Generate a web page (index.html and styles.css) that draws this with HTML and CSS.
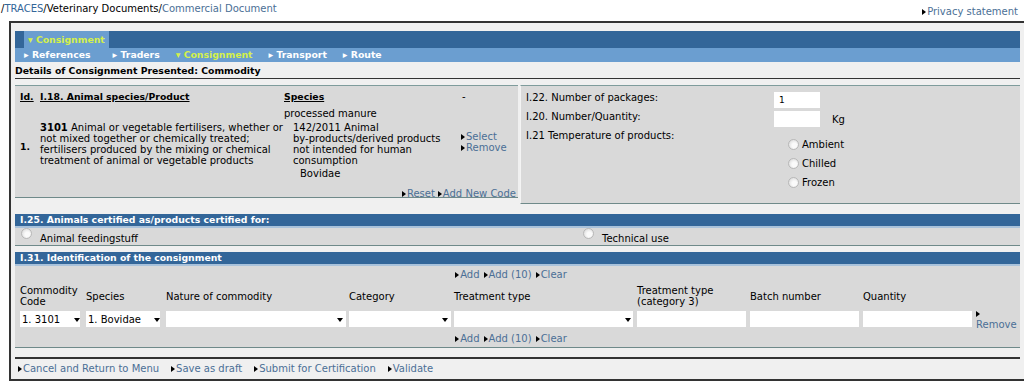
FILE: index.html
```html
<!DOCTYPE html>
<html lang="en">
<head>
  <meta charset="UTF-8" />
  <title>TRACES - Commercial Document</title>
  <link rel="stylesheet" href="styles.css">
</head>
<body>
  <div class="header">
    <div class="crumbs">/<a href="#">TRACES</a>/Veterinary Documents/<a href="#">Commercial Document</a></div>
    <a class="arrow privacy" href="#">Privacy statement</a>
  </div>

  <div class="frame">
    <!-- tabs -->
    <div class="tabs">
      <span class="tab-active">&#9662; Consignment</span>
    </div>
    <div class="subtabs">
      <span>&#9656; References</span>
      <span>&#9656; Traders</span>
      <span class="on">&#9662; Consignment</span>
      <span>&#9656; Transport</span>
      <span>&#9656; Route</span>
    </div>
    <div class="title">Details of Consignment Presented: Commodity</div>

    <div class="panels">
      <!-- I.18 -->
      <div class="panel left">
        <div class="prod-grid">
          <div class="th">Id.</div>
          <div class="th">I.18. Animal species/Product</div>
          <div class="th">Species</div>
          <div class="dash">-</div>

          <div class="rowid">1.</div>
          <div class="desc"><b>3101</b> Animal or vegetable fertilisers, whether or not mixed together or chemically treated; fertilisers produced by the mixing or chemical treatment of animal or vegetable products</div>
          <div class="species">
            <div>processed manure</div>
            <div class="sp-cat">142/2011 Animal<br>by-products/derived products<br>not intended for human<br>consumption</div>
            <div class="sp-name">Bovidae</div>
          </div>
          <div class="acts">
            <a class="arrow" href="#">Select</a>
            <a class="arrow" href="#">Remove</a>
          </div>
        </div>
        <div class="panel-links">
          <a class="arrow" href="#">Reset</a>
          <a class="arrow" href="#">Add New Code</a>
        </div>
      </div>

      <!-- I.20 - I.22 -->
      <div class="panel right">
        <div class="qty-grid">
          <div>I.22. Number of packages:</div>
          <div><input class="box" type="text" value="1"></div>
          <div>I.20. Number/Quantity:</div>
          <div><input class="box" type="text"><span class="unit">Kg</span></div>
          <div>I.21 Temperature of products:</div>
          <div class="temps">
            <label><input class="radio" type="radio" name="temp"> Ambient</label>
            <label><input class="radio" type="radio" name="temp"> Chilled</label>
            <label><input class="radio" type="radio" name="temp"> Frozen</label>
          </div>
        </div>
      </div>
    </div>

    <!-- I.25 -->
    <div class="bar">I.25. Animals certified as/products certified for:</div>
    <div class="block purpose">
      <label><input class="radio" type="radio" name="purpose"> <span>Animal feedingstuff</span></label>
      <label><input class="radio" type="radio" name="purpose"> <span>Technical use</span></label>
    </div>

    <!-- I.31 -->
    <div class="bar second">I.31. Identification of the consignment</div>
    <div class="block ident">
      <div class="add-links">
        <a class="arrow" href="#">Add</a>
        <a class="arrow" href="#">Add (10)</a>
        <a class="arrow" href="#">Clear</a>
      </div>
      <div class="id-grid">
        <div>Commodity<br>Code</div>
        <div>Species</div>
        <div>Nature of commodity</div>
        <div>Category</div>
        <div>Treatment type</div>
        <div>Treatment type<br>(category 3)</div>
        <div>Batch number</div>
        <div>Quantity</div>
        <div></div>

        <div class="sel w60"><select><option>1. 3101</option></select></div>
        <div class="sel w74"><select><option>1. Bovidae</option></select></div>
        <div class="sel w180"><select><option></option></select></div>
        <div class="sel w102"><select><option></option></select></div>
        <div class="sel w179"><select><option></option></select></div>
        <div><input class="cell" type="text"></div>
        <div><input class="cell" type="text"></div>
        <div><input class="cell" type="text"></div>
        <div class="remove"><span class="arrow"></span><br><a href="#">Remove</a></div>
      </div>
      <div class="add-links">
        <a class="arrow" href="#">Add</a>
        <a class="arrow" href="#">Add (10)</a>
        <a class="arrow" href="#">Clear</a>
      </div>
    </div>

    <div class="footer">
      <a class="arrow" href="#">Cancel and Return to Menu</a>
      <a class="arrow" href="#">Save as draft</a>
      <a class="arrow" href="#">Submit for Certification</a>
      <a class="arrow" href="#">Validate</a>
    </div>
  </div>
</body>
</html>
```

FILE: styles.css
```css
* {
  box-sizing: border-box;
}
html, body {
  overflow: hidden;
}
body {
  margin: 0;
  font-family: 'DejaVu Sans', Verdana, sans-serif;
  font-size: 10px;
  color: #000;
  background: #fff;
}
.tab-active, .subtabs, .title, .th, .rowid, .bar {
  font-weight: bold;
  font-size: 9.3px;
}
a {
  color: #4b6f96;
  text-decoration: none;
}
.arrow::before {
  content: "";
  display: inline-block;
  border-left: 4px solid #000;
  border-top: 3px solid transparent;
  border-bottom: 3px solid transparent;
  margin-right: 1px;
  vertical-align: 0;
}

/* header */
.header {
  height: 21px;
  display: flex;
  justify-content: space-between;
  align-items: flex-start;
  padding: 3px 6px 0 1px;
}
.crumbs a:first-child {
  color: #336699;
}
.privacy {
  margin-top: 3px;
}

/* outer frame */
.frame {
  margin-left: 9px;
  width: 1015px;
  border: 2px solid #333;
  border-right: 0;
  background: #f0f0f0;
  padding: 8px 4px 0 4px;
  height: 360px;
}
.tabs {
  height: 17px;
  background: #336699;
  padding-left: 9px;
}
.tab-active {
  display: inline-block;
  height: 17px;
  line-height: 18px;
  white-space: nowrap;
  padding: 0 4px 0 4px;
  background: #6b9ed0;
  color: #d4f04a;
}
.subtabs {
  height: 14px;
  line-height: 14px;
  background: #6b9ed0;
  color: #fff;
  padding-left: 9px;
  display: flex;
  gap: 16px;
  white-space: nowrap;
}
.subtabs span:nth-child(2) {
  margin-left: 6px;
}
.subtabs .on {
  color: #d4f04a;
}
.title {
  line-height: 15px;
  padding-top: 1px;
  border-bottom: 1px solid #333;
}

/* two panels */
.panels {
  display: flex;
  gap: 2px;
  margin-top: 6px;
  align-items: flex-start;
}
.panel {
  background: #d9d9d9;
  border-top: 1px solid #7f9c9c;
  border-bottom: 1px solid #6f8a8a;
}
.left {
  width: 503px;
  height: 113px;
  padding: 5px 2px 0 5px;
}
.right {
  flex: 1;
  height: 119px;
  border-left: 1px solid #f4f4f4;
  padding: 6px 4px 0 5px;
}
.prod-grid {
  display: grid;
  grid-template-columns: 20px 244px 176px 1fr;
  line-height: 11px;
}
.th {
  text-decoration: underline;
  padding-bottom: 6px;
}
.dash {
  padding-left: 2px;
}
.rowid {
  align-self: center;
  padding-top: 6px;
}
.desc {
  align-self: center;
}
.sp-cat {
  margin: 3px 0 2px 9px;
  white-space: nowrap;
}
.sp-name {
  margin-left: 16px;
}
.acts {
  display: flex;
  flex-direction: column;
  align-self: center;
  margin-top: -4px;
  padding-left: 1px;
}
.panel-links {
  display: flex;
  justify-content: flex-end;
  gap: 3px;
  margin-top: 9px;
  line-height: 11px;
}
.qty-grid {
  display: grid;
  grid-template-columns: 248px 1fr;
  row-gap: 3px;
  align-items: start;
}
.qty-grid > div:nth-child(odd) {
  line-height: 11px;
}
.box {
  width: 46px;
  height: 16px;
  border: 0;
  background: #fff;
  font: inherit;
  font-size: 9px;
  padding: 0 5px;
  vertical-align: top;
}
.unit {
  display: inline-block;
  margin: 3px 0 0 12px;
  line-height: 11px;
}
.temps {
  display: flex;
  flex-direction: column;
  gap: 6px;
  padding: 8px 0 0 14px;
}
.temps label {
  display: flex;
  align-items: center;
  gap: 3px;
  height: 13px;
}
.radio {
  appearance: none;
  width: 11px;
  height: 11px;
  margin: 0;
  border-radius: 50%;
  border: 1px solid #b8b8b8;
  background: radial-gradient(circle at 60% 60%, #fafafa 30%, #dedede 80%);
}

/* section bars */
.bar {
  background: #336699;
  color: #fff;
  height: 14px;
  line-height: 12px;
  padding-left: 5px;
  border-bottom: 2px solid #a9c2db;
  margin-top: 10px;
}
.bar.second {
  margin-top: 6px;
}
.block {
  background: #d9d9d9;
  border-bottom: 1px solid #6f8a8a;
}
.purpose {
  display: grid;
  grid-template-columns: 562px 1fr;
  height: 18px;
  padding-left: 6px;
}
.purpose label {
  display: flex;
  align-items: flex-start;
  gap: 8px;
}
.purpose span {
  padding-top: 5px;
  line-height: 11px;
}
.ident {
  height: 82px;
  padding: 3px 0 0 5px;
}
.add-links {
  display: flex;
  justify-content: center;
  gap: 4px;
  line-height: 11px;
  padding-right: 18px;
}
.id-grid {
  display: grid;
  grid-template-columns: 66px 80px 183px 105px 183px 113px 113px 113px 1fr;
  grid-template-rows: 22px 26px;
  align-items: center;
  line-height: 11px;
  margin-top: 5px;
}
.sel {
  position: relative;
  align-self: start;
  margin-top: 4px;
}
.sel select {
  appearance: none;
  display: block;
  height: 16px;
  border: 0;
  background: #fff;
  font: inherit;
  padding: 0 0 0 2px;
  color: #000;
  border-radius: 0;
}
.sel::after {
  content: "";
  position: absolute;
  right: 6px;
  top: 7px;
  border-top: 4px solid #000;
  border-left: 3px solid transparent;
  border-right: 3px solid transparent;
}
.w60 select { width: 60px; }
.w74 select { width: 74px; }
.w180 select { width: 180px; }
.w102 select { width: 102px; }
.w179 select { width: 179px; }
.cell {
  display: block;
  width: 109px;
  height: 16px;
  border: 0;
  background: #fff;
  margin-top: -3px;
}
.remove {
  line-height: 11px;
  margin-top: -2px;
}

/* footer */
.footer {
  margin-top: 9px;
  border-top: 2px solid #333;
  padding: 4px 0 0 3px;
  display: flex;
  gap: 12px;
  line-height: 11px;
}
```
